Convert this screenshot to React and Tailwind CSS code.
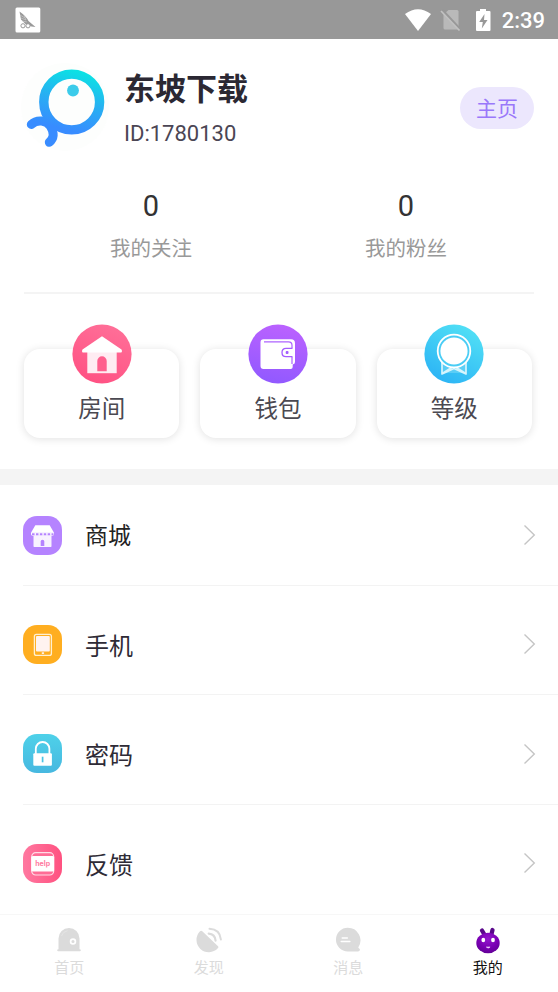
const shortcuts = [
  { label: '房间', icon: RoomIcon },
  { label: '钱包', icon: WalletIcon },
  { label: '等级', icon: LevelIcon }
];

const menuItems = [
  { label: '商城', icon: ShopIcon, text: 'text-[23px] text-[#222222]' },
  { label: '手机', icon: PhoneIcon, text: 'text-[24px] text-[#2e2b36]' },
  { label: '密码', icon: LockIcon, text: 'text-[24px] text-[#2e2b36]' },
  { label: '反馈', icon: HelpIcon, text: 'text-[24px] text-[#2e2b36]' }
];

const tabs = [
  { label: '首页', icon: HomeIcon },
  { label: '发现', icon: DiscoverIcon },
  { label: '消息', icon: MessageIcon },
  { label: '我的', icon: MineIcon, active: true }
];

function RoomIcon() {
  return (
    <svg width="60" height="60" viewBox="0 0 60 60">
      <defs>
        <linearGradient id="room" x1="0.7" y1="0" x2="0.3" y2="1">
          <stop offset="0" stopColor="#ff6f98" />
          <stop offset="1" stopColor="#ff5183" />
        </linearGradient>
      </defs>
      <circle cx="30" cy="30" r="29.6" fill="url(#room)" />
      <path d="M15.3 27h29.4v22.2H15.3z" fill="#ffecf2" />
      <path d="M30 12.2 49.5 25.4q1.4 2.9-1.2 3.2H11.7q-2.6-.3-1.2-3.2z" fill="#fff" />
      <path d="M25.3 47.2V37a4.7 4.7 0 0 1 9.4 0v10.2z" fill="#ff5f8d" />
    </svg>
  );
}

function WalletIcon() {
  return (
    <svg width="60" height="60" viewBox="0 0 60 60">
      <defs>
        <linearGradient id="wallet" x1="0.6" y1="0" x2="0.4" y2="1">
          <stop offset="0" stopColor="#bb62ff" />
          <stop offset="1" stopColor="#9159ff" />
        </linearGradient>
      </defs>
      <circle cx="30" cy="30" r="29.6" fill="url(#wallet)" />
      <path d="M15.5 15.2h27.500q4 0 4 4V38q0 2-2.300 2.500V43q0 2-2 2H15.500q-3 0-3-3V18.200q0-3 3-3z" fill="#fff" />
      <path d="M16 17.800h24.500q3.500 0 3.500 3.500V24M44 33v7" fill="none" stroke="#ad63ff" strokeWidth="1.200" />
      <path d="M44.500 24.300h-6.500q-4 0-4 4.200t4 4.200h6.500" fill="#fff" stroke="#a45eff" strokeWidth="1.300" />
      <rect x="37.700" y="27.100" width="2.800" height="2.800" rx="1" fill="#a45eff" />
    </svg>
  );
}

function LevelIcon() {
  return (
    <svg width="60" height="60" viewBox="0 0 60 60">
      <defs>
        <linearGradient id="level" x1="0.8" y1="0.1" x2="0.3" y2="1">
          <stop offset="0" stopColor="#50def5" />
          <stop offset="1" stopColor="#2cb4f5" />
        </linearGradient>
      </defs>
      <circle cx="30" cy="30" r="29.6" fill="url(#level)" />
      <path
        d="M18 38v12l12-5.5L42 50V38M19 49l11-7 11 7"
        fill="#7fdcf8"
        fillOpacity="0.5"
        stroke="#d6f5fd"
        strokeWidth="1.7"
        strokeLinejoin="round"
      />
      <circle cx="30" cy="27" r="16.3" fill="#4acdf5" stroke="#fff" strokeWidth="1.8" />
      <circle cx="30" cy="27" r="13.6" fill="#fff" />
    </svg>
  );
}

function ShopIcon() {
  return (
    <svg width="39" height="39" viewBox="0 0 39 39">
      <rect width="39" height="39" rx="14" fill="#b583ff" />
      <path d="M12.3 9.3h14.4L31 16.8H8z" fill="#fff" />
      <path d="M10.5 19.5h18v10.8q0 .7-.7.7H11.2q-.7 0-.7-.7z" fill="#f8f2ff" />
      <path d="M8 16.5h23v1.5q0 1.8-1.5 1.8h-20Q8 19.8 8 18z" fill="#fff" />
      <path d="M9 18.3h21.5" stroke="#b583ff" strokeWidth="2" strokeDasharray="2.6 1.3" />
      <path d="M17.7 30v-4.500a1.800 1.800 0 0 1 3.600 0V30z" fill="#b583ff" />
    </svg>
  );
}

function PhoneIcon() {
  return (
    <svg width="39" height="39" viewBox="0 0 39 39">
      <rect width="39" height="39" rx="14" fill="#ffae20" />
      <rect x="11.4" y="9.4" width="17" height="21" rx="2" fill="#ffae20" stroke="#fff0d2" strokeWidth="1.3" />
      <rect x="13" y="11" width="13.8" height="15.4" rx="1" fill="#fff3f0" />
      <rect x="18.6" y="27.2" width="2.6" height="1.8" rx="0.9" fill="#fff3f0" />
    </svg>
  );
}

function LockIcon() {
  return (
    <svg width="39" height="39" viewBox="0 0 39 39">
      <defs>
        <linearGradient id="lock" x1="0" y1="0" x2="0" y2="1">
          <stop offset="0" stopColor="#4ed1e9" />
          <stop offset="1" stopColor="#47b8e0" />
        </linearGradient>
      </defs>
      <rect width="39" height="39" rx="14" fill="url(#lock)" />
      <path d="M12.8 20v-5.200a6.800 6.800 0 0 1 13.600 0V20" fill="none" stroke="#fff" strokeWidth="1.8" />
      <rect x="10.3" y="19.2" width="18.6" height="12.5" rx="1" fill="#fff" />
      <path d="M19.6 22.7v5.6" stroke="#4ac4e5" strokeWidth="1.7" />
    </svg>
  );
}

function HelpIcon() {
  return (
    <svg width="39" height="39" viewBox="0 0 39 39">
      <defs>
        <linearGradient id="help" x1="0" y1="0" x2="1" y2="0">
          <stop offset="0" stopColor="#ff78a0" />
          <stop offset="1" stopColor="#ff5180" />
        </linearGradient>
      </defs>
      <rect width="39" height="39" rx="14" fill="url(#help)" />
      <rect x="8.7" y="8.7" width="22" height="22.3" rx="4" fill="#ff6d96" stroke="#ffdce6" strokeWidth="1.2" />
      <rect x="8.3" y="12" width="22.8" height="15.5" rx="1.5" fill="#fff" />
      <text x="19.7" y="22" textAnchor="middle" fontFamily="Inter, sans-serif" fontWeight="700" fontSize="7" fill="#ff7aa0">
        help
      </text>
    </svg>
  );
}

function HomeIcon() {
  return (
    <svg width="28" height="28" viewBox="0 0 28 28">
      <path d="M3.5 24V12.500a10.500 10.500 0 0 1 21 0V24z" fill="#dbdbdb" />
      <path d="M3.2 24.3h21.6" stroke="#dbdbdb" strokeWidth="2" strokeLinecap="round" />
      <path d="M6.5 10q1.5-4.500 6-5.300" fill="none" stroke="#e6e6e6" strokeWidth="0.8" />
      <circle cx="18" cy="15.5" r="2.4" fill="#dbdbdb" stroke="#fff" strokeWidth="1.7" />
    </svg>
  );
}

function DiscoverIcon() {
  return (
    <svg width="28" height="28" viewBox="0 0 28 28">
      <path d="M4.8 5.500Q6 4 7.300 5.200L22.800 20q1.200 1.200 0 2.300A12.300 12.300 0 0 1 4.800 5.500z" fill="#dbdbdb" />
      <path d="M13.7 7.700q6.300.7 6.900 6.900" fill="none" stroke="#dbdbdb" strokeWidth="2.2" strokeLinecap="round" />
      <path d="M14.5 2.800q10.500.5 11.400 10.700" fill="none" stroke="#dbdbdb" strokeWidth="2" strokeLinecap="round" />
    </svg>
  );
}

function MessageIcon() {
  return (
    <svg width="28" height="28" viewBox="0 0 28 28">
      <path
        d="M13.800 1.700a12.600 12.600 0 0 1 10.700 19.300q-.4.800.4 1.200 1.500.9.900 2.100-.4 1.100-1.700 1.100H13.800a11.850 11.850 0 0 1 0-23.700z"
        fill="#dbdbdb"
      />
      <path d="M8.300 12h5M7.300 15.500h8.500" stroke="#fff" strokeWidth="1.6" strokeLinecap="round" />
    </svg>
  );
}

function MineIcon() {
  return (
    <svg width="28" height="28" viewBox="0 0 28 28">
      <defs>
        <radialGradient id="mine" cx="0.5" cy="0.3" r="0.7">
          <stop offset="0" stopColor="#9318cc" />
          <stop offset="0.6" stopColor="#7a00b4" />
          <stop offset="1" stopColor="#620096" />
        </radialGradient>
      </defs>
      <path d="M8 4.500l3 5M18.500 4l-1.500 6" stroke="#59088a" strokeWidth="4.300" strokeLinecap="round" />
      <ellipse cx="14" cy="17" rx="11.700" ry="10.300" fill="url(#mine)" />
      <ellipse cx="9.300" cy="14" rx="1.900" ry="2.300" fill="#fff" />
      <ellipse cx="19" cy="14" rx="1.900" ry="2.300" fill="#fff" />
      <path d="M12.300 21q1.900 2.200 3.800 0z" fill="#f3d5ff" stroke="#f3d5ff" strokeWidth="0.600" />
    </svg>
  );
}

function StatusBar() {
  return (
    <div className="flex h-[39px] shrink-0 items-center bg-[#989898] pl-[15px] pr-[13px]">
      <svg width="26" height="26" viewBox="0 0 26 26">
        <rect x="0.5" y="0.5" width="24.8" height="25" rx="1.5" fill="#fff" />
        <path d="M4.500 4.500Q11 9 13.500 14l7 6-4-.5-6-2.500-4.500-4.500z" fill="#999" />
        <path d="M5 8l5 3M6 11l5 2M7 14l5 1M9 8l2 5" stroke="#ddd" strokeWidth="0.5" />
        <circle cx="8" cy="18.8" r="2.1" fill="#fff" stroke="#999" />
        <circle cx="13" cy="18.8" r="2.1" fill="#fff" stroke="#999" />
      </svg>
      <div className="ml-auto flex items-center">
        <svg width="28" height="24" viewBox="0 0 28 24">
          <path d="M1 6Q14-3.500 27 6L14 23z" fill="#fff" />
        </svg>
        <svg className="ml-2" width="22" height="24" viewBox="0 0 22 24">
          <path d="M3.500 6.500 8.500 2H17q1.500 0 1.500 1.500v18H5q-1.500 0-1.500-1.500z" fill="#b9b9b9" />
          <path d="M2.200 2.200 20.500 22" stroke="#989898" strokeWidth="3" />
          <path d="M1 3 19.500 22.500" stroke="#c2c2c2" strokeWidth="1.7" />
        </svg>
        <svg className="ml-[13px]" width="17" height="24" viewBox="0 0 17 24">
          <path d="M5 1h6v2h3.500q1 0 1 1v18q0 1-1 1H2q-1 0-1-1V4q0-1 1-1h3z" fill="#fff" />
          <path d="M9.500 6 4.200 14h3.600l-1 6.500L12.500 12H9z" fill="#989898" />
        </svg>
        <span className="ml-[10px] pt-0.5 font-['Roboto'] text-[22px] leading-none font-medium text-white">2:39</span>
      </div>
    </div>
  );
}

function Avatar() {
  return (
    <svg width="90" height="90" viewBox="0 0 90 90">
      <defs>
        <linearGradient id="avatar" gradientUnits="userSpaceOnUse" x1="55" y1="8" x2="40" y2="66">
          <stop offset="0" stopColor="#0be2e4" />
          <stop offset="0.5" stopColor="#27b1f2" />
          <stop offset="1" stopColor="#388cff" />
        </linearGradient>
      </defs>
      <circle cx="45" cy="45" r="44" fill="#fdfefd" />
      <g fill="none" stroke="url(#avatar)" strokeLinecap="round">
        <circle cx="51.7" cy="40" r="27.9" strokeWidth="9.4" />
        <path d="M11.300 62.500C17 57 26.500 58 30.500 64.500S34 76.500 29.300 80.300" strokeWidth="9" />
        <path d="M27 56 33.500 66" strokeWidth="8" />
      </g>
      <circle cx="53" cy="28.5" r="5.9" fill="#3bcbea" />
    </svg>
  );
}

function Stat({ value, label }) {
  return (
    <div className="flex flex-1 flex-col items-center pr-px">
      <span className="font-['Roboto'] text-[29px] leading-[34px] text-[#333333]">{value}</span>
      <span className="mt-3 text-[20.5px] leading-7 text-[#999999]">{label}</span>
    </div>
  );
}

export default function App() {
  return (
    <div className="flex h-[992px] w-[558px] flex-col overflow-hidden bg-white font-['Roboto','Noto_Sans_CJK_SC',sans-serif]">
      <StatusBar />

      <div className="flex h-[150px] items-start pt-[23px] pr-6 pl-5">
        <Avatar />
        <div className="ml-[14px] flex flex-col pt-1.5">
          <h1 className="text-[31px] leading-[44px] font-bold text-[#2b2833]">东坡下载</h1>
          <p className="mt-2 text-[22px] leading-7 text-[#4b4654]">ID:1780130</p>
        </div>
        <button className="mt-[25px] ml-auto h-[42px] w-[74px] rounded-full bg-[#ece7fd] pt-1 text-[21px] text-[#9a78fa]">
          主页
        </button>
      </div>

      <div className="mx-6 flex h-[105px] border-b-2 border-[#f4f4f4]">
        <Stat value="0" label="我的关注" />
        <Stat value="0" label="我的粉丝" />
      </div>

      <div className="flex h-[175px] gap-[21px] pt-[55px] pr-[26px] pl-6">
        {shortcuts.map(({ label, icon: Icon }) => (
          <div
            key={label}
            className="flex h-[89px] flex-1 flex-col items-center rounded-2xl bg-white shadow-[0_1px_8px_rgba(0,0,0,0.12)]"
          >
            <div className="-mt-[25px] h-[60px]">
              <Icon />
            </div>
            <span className="mt-2 text-[23.5px] leading-[34px] text-[#4b4951]">{label}</span>
          </div>
        ))}
      </div>

      <div className="h-4 shrink-0 bg-[#f4f4f4]" />

      <ul className="flex h-[429px] shrink-0 flex-col justify-between pl-[23px]">
        {menuItems.map(({ label, icon: Icon, text }, index) => (
          <li
            key={label}
            className={`flex h-[101px] items-center pr-[22px] ${index < 3 ? 'border-b border-[#f3f3f3]' : ''}`}
          >
            <Icon />
            <span className={`ml-[23px] pt-[5px] ${text}`}>{label}</span>
            <svg className="ml-auto" width="13" height="22" viewBox="0 0 13 22">
              <path d="M1.5 1.5 11.3 11 1.5 20.5" fill="none" stroke="#c5c5c5" strokeWidth="1.4" />
            </svg>
          </li>
        ))}
      </ul>

      <nav className="flex flex-1 border-t border-[#f7f7f7] pt-[11px]">
        {tabs.map(({ label, icon: Icon, active }) => (
          <div key={label} className="flex flex-1 flex-col items-center pr-px">
            <Icon />
            <span className={`pt-0.5 text-[15px] leading-6 ${active ? 'text-[#111111]' : 'text-[#dbdbdb]'}`}>
              {label}
            </span>
          </div>
        ))}
      </nav>
    </div>
  );
}
